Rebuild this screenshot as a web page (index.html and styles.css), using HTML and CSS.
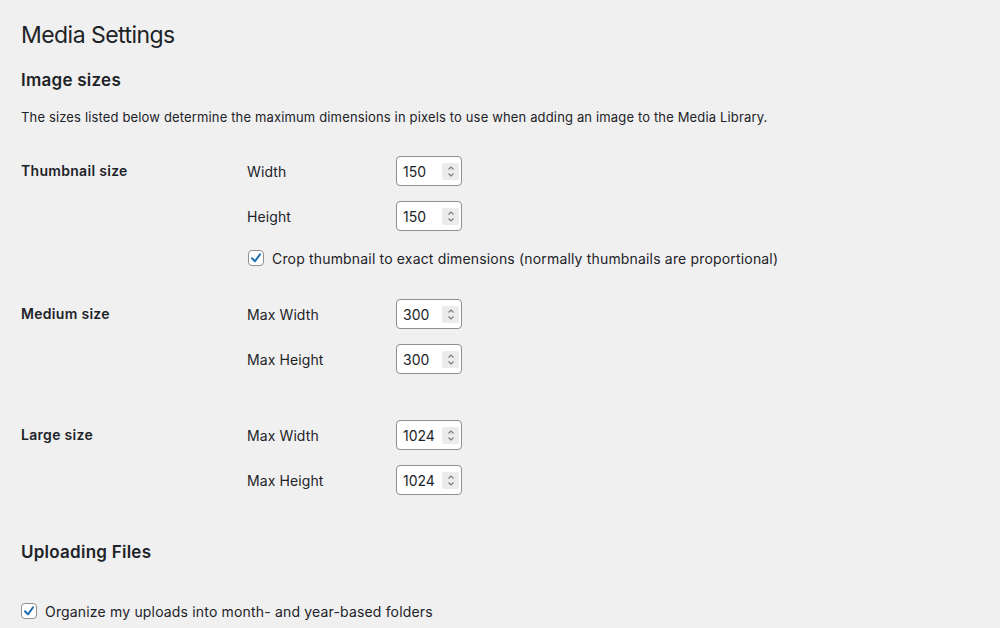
FILE: index.html
```html
<!DOCTYPE html>
<html lang="en">
<head>
<meta charset="utf-8">
<title>Media Settings</title>
<link rel="stylesheet" href="styles.css">
</head>
<body>
<div class="wrap">
  <h1 class="title">Media Settings</h1>
  <h2 class="heading">Image sizes</h2>
  <p class="desc">The sizes listed below determine the maximum dimensions in pixels to use when adding an image to the Media Library.</p>

  <div class="size-group group-thumb">
    <div class="group-label">Thumbnail size</div>
    <div class="fields">
      <div class="field">
        <span class="field-label">Width</span>
        <div class="num"><span class="num-val">150</span><span class="spin"><svg width="8" height="13" viewBox="0 0 8 13"><path d="M1.5 4.5 L4 2 L6.5 4.5 M1.5 8.5 L4 11 L6.5 8.5" fill="none" stroke="#7a7a7a" stroke-width="1.1" /></svg></span></div>
      </div>
      <div class="field">
        <span class="field-label">Height</span>
        <div class="num"><span class="num-val">150</span><span class="spin"><svg width="8" height="13" viewBox="0 0 8 13"><path d="M1.5 4.5 L4 2 L6.5 4.5 M1.5 8.5 L4 11 L6.5 8.5" fill="none" stroke="#7a7a7a" stroke-width="1.1" /></svg></span></div>
      </div>
      <label class="check-row crop-row">
        <span class="checkbox"><svg width="14" height="14" viewBox="0 0 14 14"><path d="M3 7.3 L5.9 10.3 L11 3.4" fill="none" stroke="#2271b1" stroke-width="2" stroke-linecap="round" stroke-linejoin="round"/></svg></span>
        <span class="check-text">Crop thumbnail to exact dimensions (normally thumbnails are proportional)</span>
      </label>
    </div>
  </div>

  <div class="size-group group-medium">
    <div class="group-label">Medium size</div>
    <div class="fields">
      <div class="field">
        <span class="field-label">Max Width</span>
        <div class="num"><span class="num-val">300</span><span class="spin"><svg width="8" height="13" viewBox="0 0 8 13"><path d="M1.5 4.5 L4 2 L6.5 4.5 M1.5 8.5 L4 11 L6.5 8.5" fill="none" stroke="#7a7a7a" stroke-width="1.1" /></svg></span></div>
      </div>
      <div class="field">
        <span class="field-label">Max Height</span>
        <div class="num"><span class="num-val">300</span><span class="spin"><svg width="8" height="13" viewBox="0 0 8 13"><path d="M1.5 4.5 L4 2 L6.5 4.5 M1.5 8.5 L4 11 L6.5 8.5" fill="none" stroke="#7a7a7a" stroke-width="1.1" /></svg></span></div>
      </div>
    </div>
  </div>

  <div class="size-group group-large">
    <div class="group-label">Large size</div>
    <div class="fields">
      <div class="field">
        <span class="field-label">Max Width</span>
        <div class="num"><span class="num-val">1024</span><span class="spin"><svg width="8" height="13" viewBox="0 0 8 13"><path d="M1.5 4.5 L4 2 L6.5 4.5 M1.5 8.5 L4 11 L6.5 8.5" fill="none" stroke="#7a7a7a" stroke-width="1.1" /></svg></span></div>
      </div>
      <div class="field">
        <span class="field-label">Max Height</span>
        <div class="num"><span class="num-val">1024</span><span class="spin"><svg width="8" height="13" viewBox="0 0 8 13"><path d="M1.5 4.5 L4 2 L6.5 4.5 M1.5 8.5 L4 11 L6.5 8.5" fill="none" stroke="#7a7a7a" stroke-width="1.1" /></svg></span></div>
      </div>
    </div>
  </div>

  <h2 class="heading heading-upload">Uploading Files</h2>

  <label class="check-row upload-row">
    <span class="checkbox"><svg width="14" height="14" viewBox="0 0 14 14"><path d="M3 7.3 L5.9 10.3 L11 3.4" fill="none" stroke="#2271b1" stroke-width="2" stroke-linecap="round" stroke-linejoin="round"/></svg></span>
    <span class="check-text">Organize my uploads into month- and year-based folders</span>
  </label>
</div>
</body>
</html>
```

FILE: styles.css
```css
* { box-sizing: border-box; }

html, body {
  margin: 0;
  padding: 0;
  background: #f0f0f1;
}

body {
  color: #1d2327;
  font-family: Inter, "Noto Sans", "Liberation Sans", sans-serif;
  width: 1000px;
  height: 628px;
  overflow: hidden;
}

.wrap {
  padding: 21px 0 0 21px;
}

.title {
  margin: 0;
  font-size: 23px;
  line-height: 29px;
  font-weight: 400;
  letter-spacing: -0.55px;
}

.heading {
  margin: 18px 0 0;
  font-size: 17px;
  line-height: 24px;
  font-weight: 600;
  letter-spacing: 0.25px;
}

.desc {
  margin: 15px 0 0;
  font-size: 13px;
  line-height: 20px;
  letter-spacing: 0.15px;
}

.size-group {
  display: grid;
  grid-template-columns: 226px 1fr;
}

.group-thumb { margin-top: 29px; }
.group-medium { margin-top: 33px; }
.group-large { margin-top: 46px; }

.group-label {
  font-size: 14px;
  font-weight: 600;
  line-height: 30px;
  height: 30px;
  letter-spacing: 0.3px;
}

.fields {
  display: flex;
  flex-direction: column;
  gap: 15px;
}

.field {
  display: flex;
  align-items: center;
  height: 30px;
}

.field-label {
  width: 149px;
  font-size: 14px;
  letter-spacing: 0.1px;
}

.num {
  width: 66px;
  height: 30px;
  border: 1px solid #8c8f94;
  border-radius: 4px;
  background: #fff;
  display: flex;
  align-items: center;
  padding-left: 6px;
  font-size: 14px;
}

.num-val {
  flex: 1;
}

.spin {
  width: 17px;
  height: 17px;
  margin-right: 2px;
  background: #ebebeb;
  border-radius: 2px;
  display: flex;
  align-items: center;
  justify-content: center;
}

.check-row {
  display: flex;
  align-items: center;
  height: 16px;
  font-size: 14px;
  letter-spacing: 0.17px;
}

.crop-row {
  margin-top: 4px;
  margin-left: 1px;
}

.checkbox {
  width: 16px;
  height: 16px;
  border: 1px solid #8c8f94;
  border-radius: 4px;
  background: #fff;
  display: flex;
  align-items: center;
  justify-content: center;
  flex: none;
}

.check-text {
  margin-left: 8px;
}

.heading-upload {
  margin-top: 45px;
}

.upload-row {
  margin-top: 39px;
}
```
